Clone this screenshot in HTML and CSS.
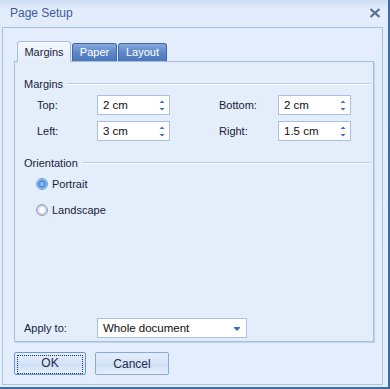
FILE: index.html
```html
<!DOCTYPE html>
<html lang="en">
  <head>
    <meta charset="UTF-8" />
    <title>Page Setup</title>
    <link rel="stylesheet" href="styles.css">
  </head>
  <body>
    <div class="dialog">
      <div class="titlebar">
        <span class="title">Page Setup</span>
        <svg class="close" width="12" height="10" viewBox="0 0 12 10">
          <path d="M1.5 1 L10.5 9 M10.5 1 L1.5 9" stroke="#5a6f96" stroke-width="2.3" />
        </svg>
      </div>
      <div class="client">
        <div class="tabs">
          <div class="tab active">Margins</div>
          <div class="tab">Paper</div>
          <div class="tab">Layout</div>
        </div>
        <div class="panel">
          <div class="group-head"><span>Margins</span></div>
          <div class="fields">
            <span class="label">Top:</span>
            <div class="spin"><span>2 cm</span>
              <svg class="arrows" width="6" height="13" viewBox="0 0 6 13"><path d="M0.5 4 L3 1.5 L5.5 4 Z M0.5 9 L5.5 9 L3 11.5 Z" fill="#3f6fb6"/></svg>
            </div>
            <span class="label">Bottom:</span>
            <div class="spin"><span>2 cm</span>
              <svg class="arrows" width="6" height="13" viewBox="0 0 6 13"><path d="M0.5 4 L3 1.5 L5.5 4 Z M0.5 9 L5.5 9 L3 11.5 Z" fill="#3f6fb6"/></svg>
            </div>
            <span class="label">Left:</span>
            <div class="spin"><span>3 cm</span>
              <svg class="arrows" width="6" height="13" viewBox="0 0 6 13"><path d="M0.5 4 L3 1.5 L5.5 4 Z M0.5 9 L5.5 9 L3 11.5 Z" fill="#3f6fb6"/></svg>
            </div>
            <span class="label">Right:</span>
            <div class="spin"><span>1.5 cm</span>
              <svg class="arrows" width="6" height="13" viewBox="0 0 6 13"><path d="M0.5 4 L3 1.5 L5.5 4 Z M0.5 9 L5.5 9 L3 11.5 Z" fill="#3f6fb6"/></svg>
            </div>
          </div>
          <div class="group-head orient"><span>Orientation</span></div>
          <div class="radios">
            <label class="radio checked"><i class="dot"></i>Portrait</label>
            <label class="radio"><i class="dot"></i>Landscape</label>
          </div>
          <div class="apply">
            <span class="label">Apply to:</span>
            <div class="combo"><span>Whole document</span>
              <svg class="drop" width="6" height="4" viewBox="0 0 6 4"><path d="M0 0 H6 V1 L3 4 L0 1 Z" fill="#3f6fb6"/></svg>
            </div>
          </div>
        </div>
        <div class="buttons">
          <button class="btn default"><span>OK</span></button>
          <button class="btn">Cancel</button>
        </div>
      </div>
    </div>
  </body>
</html>
```

FILE: styles.css
```css
body {
  margin: 0;
  font-family: "Liberation Sans", Arial, sans-serif;
  font-size: 11px;
  color: #18223a;
}
.dialog {
  width: 390px;
  height: 389px;
  box-sizing: border-box;
  border-right: 2px solid #3e6aa6;
  border-bottom: 2px solid #3e6aa6;
  background: linear-gradient(#cddef4, #e2ecfa 9px, #e4eefb);
  display: flex;
  flex-direction: column;
}
.titlebar {
  height: 27px;
  display: flex;
  align-items: center;
  justify-content: space-between;
  padding: 0 7px 0 10px;
}
.title {
  font-size: 12px;
  color: #3e5aa3;
  padding-bottom: 1px;
}
.close {
  margin-bottom: 1px;
}
.client {
  margin-left: 2px;
  width: 381px;
  height: 358px;
  box-sizing: border-box;
  border: 1px solid #a9c1e2;
  background: #e3edfb;
  padding: 13px 0 0 11px;
  display: flex;
  flex-direction: column;
}
.tabs {
  display: flex;
  align-items: flex-end;
  margin-left: 3px;
  gap: 1px;
  height: 20px;
  position: relative;
  z-index: 1;
}
.tab {
  height: 18px;
  box-sizing: border-box;
  padding: 0;
  text-align: center;
  line-height: 17px;
  color: #fff;
  border: 1px solid #3f68aa;
  border-bottom: none;
  border-radius: 3px 3px 0 0;
  background: linear-gradient(#86a8dc, #5f88c8 50%, #4a76ba);
}
.tab.active {
  height: 21px;
  line-height: 20px;
  width: 54px;
  color: #18223a;
  border-color: #a6bfe0;
  background: linear-gradient(#f3f7fd, #e4eefb);
  margin-bottom: -1px;
}
.tab:nth-child(2) { width: 45px; }
.tab:nth-child(3) { width: 49px; }
.panel {
  width: 360px;
  height: 281px;
  box-sizing: border-box;
  border: 1px solid #a6bfe0;
  box-shadow: 1px 1px 0 #c4d5ee;
  background: #e4eefb;
  padding: 15px 0 3px 9px;
  display: flex;
  flex-direction: column;
}
.group-head {
  display: flex;
  align-items: center;
  height: 14px;
  margin-right: 2px;
}
.group-head::after {
  content: "";
  flex: 1;
  height: 1px;
  background: #fff;
  border-top: 1px solid #b8cce8;
  margin-left: 4px;
}
.fields {
  display: grid;
  grid-template-columns: 60px 73px 49px 59px 73px;
  grid-auto-rows: 20px;
  row-gap: 6px;
  margin: 4px 0 0 13px;
  align-items: center;
}
.fields .label:nth-of-type(2n) {
  grid-column: 4;
}
.spin, .combo {
  height: 20px;
  box-sizing: border-box;
  border: 1px solid #aac0df;
  background: #fff;
  display: flex;
  align-items: center;
  justify-content: space-between;
  padding: 0 4px 0 5px;
  font-size: 11.5px;
  color: #0d0d0d;
}
.orient {
  margin-top: 15px;
}
.radios {
  display: flex;
  flex-direction: column;
  gap: 10px;
  margin: 6px 0 0 12px;
}
.radio {
  height: 16px;
  display: flex;
  align-items: center;
  gap: 4px;
}
.dot {
  width: 12px;
  height: 12px;
  box-sizing: border-box;
  border-radius: 50%;
  border: 1px solid #8fa3c0;
  background: radial-gradient(circle, #fff 30%, #d2dbe8 55%, #b9c7da 70%, #eef3f9 85%);
}
.radio.checked .dot {
  border-color: #6c9ad4;
  background: radial-gradient(circle, #8fc2f5 15%, #3c86dc 45%, #6ea6e6 55%, #cfe2f9 75%);
}
.apply {
  margin-top: auto;
  display: flex;
  align-items: center;
}
.apply .label {
  width: 73px;
}
.combo {
  width: 150px;
  padding-right: 6px;
}
.drop {
  margin-top: 2px;
}
.buttons {
  display: flex;
  gap: 9px;
  margin-top: 10px;
}
.btn {
  width: 74px;
  height: 23px;
  box-sizing: border-box;
  border: 1px solid #86a9db;
  border-radius: 2px;
  background: linear-gradient(#e4eefb, #d6e4f7 50%, #cfdff5 55%, #e6f0fd);
  font-family: inherit;
  font-size: 12px;
  color: #1c2a4a;
  padding: 0;
}
.btn.default {
  width: 72px;
  border-color: #6b97d4;
  padding: 2px;
}
.btn.default span {
  display: block;
  height: 100%;
  line-height: 15px;
  border: 1px dotted #2a3550;
}
```
